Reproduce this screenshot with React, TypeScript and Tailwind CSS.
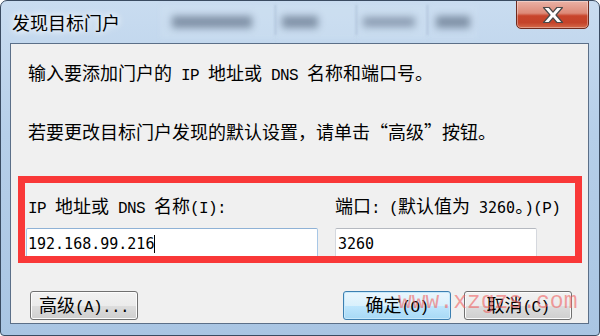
const cjk = "font-['Noto_Sans_CJK_SC',sans-serif]";
const latin = "font-['Liberation_Mono','Noto_Sans_CJK_SC',monospace] text-[16px] tracking-[-0.6px]";
const num = "font-['DejaVu_Sans_Mono','Noto_Sans_CJK_SC',monospace] text-[15px]";

function L({ children }: { children: React.ReactNode }) {
  return <span className={latin}>{children}</span>;
}

function N({ children }: { children: React.ReactNode }) {
  return <span className={num}>{children}</span>;
}

function Btn({ children, primary }: { children: React.ReactNode; primary?: boolean }) {
  return (
    <div
      className={
        "h-[29px] w-[108px] flex items-center justify-center rounded-[3px] border leading-none " +
        (primary
          ? "border-[#3c7fb1] bg-[linear-gradient(#eaf6fd_0%,#d9f0fc_50%,#bee6fd_51%,#a7d9f5_100%)] shadow-[inset_0_0_0_1px_#c7e9fb]"
          : "border-[#707070] bg-[linear-gradient(#f2f2f2_0%,#ebebeb_50%,#dddddd_51%,#cfcfcf_100%)] shadow-[inset_0_0_0_1px_#fcfcfc]")
      }
    >
      <span className="whitespace-nowrap">{children}</span>
    </div>
  );
}

export default function App() {
  return (
    <div
      className={`${cjk} relative w-[600px] h-[336px] overflow-hidden rounded-t-[7px] rounded-b-[4px] border border-[#3a4b61] bg-[linear-gradient(#c9dcf0,#b6cfe9_40%,#a9c5e3)] flex flex-col text-black`}
    >
      {/* title bar */}
      <div className="h-[42px] flex items-start pl-[11px] pr-[10px]">
        <div className="mt-[8px] text-[18px] leading-[26px] [text-shadow:0_0_6px_#fff,0_0_10px_#fff]">发现目标门户</div>
        <div className="flex items-start mt-[4px] ml-[40px] h-[34px]">
          <div className="w-[115px] h-[34px] bg-[#d4e3f2]/30 blur-[2px] flex items-center pl-[12px]">
            <div className="w-[80px] h-[12px] bg-[#4d5e75]/60 blur-[3px]" />
          </div>
          <div className="w-px h-[30px] bg-[#9fb6cf] blur-[1px]" />
          <div className="w-[80px] h-[34px] bg-[#d4e3f2]/30 blur-[2px] flex items-center pl-[6px]">
            <div className="w-[36px] h-[12px] bg-[#4d5e75]/60 blur-[3px]" />
          </div>
          <div className="w-px h-[30px] bg-[#9fb6cf] blur-[1px]" />
          <div className="w-[70px] h-[34px] bg-[#d4e3f2]/30 blur-[2px] flex items-center pl-[6px]">
            <div className="w-[52px] h-[10px] bg-[#4d5e75]/50 blur-[3px]" />
          </div>
          <div className="w-px h-[30px] bg-[#9fb6cf] blur-[1px]" />
          <div className="w-[50px] h-[34px] bg-[#d4e3f2]/25 blur-[2px] flex items-center pl-[8px]">
            <div className="w-[34px] h-[12px] bg-[#4d5e75]/60 blur-[3px]" />
          </div>
        </div>
        <div className="ml-auto -mt-px w-[73px] h-[29px] rounded-b-[5px] border border-[#6e2a1e] bg-[linear-gradient(#eab2a6_0%,#dd8a78_45%,#c8452c_55%,#c4432a_80%,#d46a4a_100%)] shadow-[inset_0_0_0_1px_rgba(255,255,255,0.35)] flex items-center justify-center">
          <svg width="22" height="18" viewBox="0 0 22 18">
            <path
              d="M1.5 1.5h5.6L11 6.2l3.9-4.7h5.6l-6.5 7.5 6.5 7.5h-5.6L11 11.8l-3.9 4.7H1.5L8 9z"
              fill="#fff"
              stroke="#4a4a4a"
              strokeWidth="1.2"
              strokeLinejoin="round"
            />
          </svg>
        </div>
      </div>

      {/* client area */}
      <div className="relative flex-1 ml-[9px] mr-[10px] mb-[11px] border border-[#5b6f88] bg-[#f0f0f0] text-[18px] leading-[24px] flex flex-col">
        <div className="pt-[16px] pl-[17px] whitespace-nowrap">
          输入要添加门户的<L> IP </L>地址或<L> DNS </L>名称和端口号。
        </div>
        <div className="mt-[31px] pl-[17px] whitespace-nowrap">若要更改目标门户发现的默认设置，请单击“高级”按钮。</div>

        <div className="mt-[50px] pl-[15px] grid grid-cols-[292px_202px] gap-x-[17px] gap-y-[7px]">
          <div className="pl-[2px] whitespace-nowrap">
            <L>IP </L>地址或<L> DNS </L>名称<L>(I):</L>
          </div>
          <div className="whitespace-nowrap">
            端口<L>: (</L>默认值为<L> </L>
            <N>3260</N>。<L>)(P)</L>
          </div>
          <div className="h-[32px] rounded-[2px] border border-[#a8c7e6] border-t-[#8fb2d6] bg-white flex items-center pl-[1px]">
            <N>192.168.99.216</N>
            <span className="w-px h-[18px] bg-black" />
          </div>
          <div className="h-[32px] rounded-[2px] border border-[#d5d8de] border-t-[#b5b9c0] bg-white flex items-center pl-[2px]">
            <N>3260</N>
          </div>
        </div>

        <div className="mt-[31px] pl-[19px] pr-[16px] flex items-center">
          <Btn>
            高级<L>(A)...</L>
          </Btn>
          <div className="ml-auto flex gap-[13px]">
            <Btn primary>
              确定<L>(O)</L>
            </Btn>
            <Btn>
              取消<L>(C)</L>
            </Btn>
          </div>
        </div>

        {/* red annotation box */}
        <div className="absolute left-[7px] top-[132px] w-[564px] h-[87px] border-[7px] border-[#f93838] pointer-events-none" />
      </div>

      {/* watermark */}
      <div className="absolute left-[397px] top-[290px] font-['Liberation_Mono',monospace] text-[23px] leading-none text-[#f06060]/60 whitespace-nowrap pointer-events-none">
        www.xzgzs.com
      </div>
    </div>
  );
}
